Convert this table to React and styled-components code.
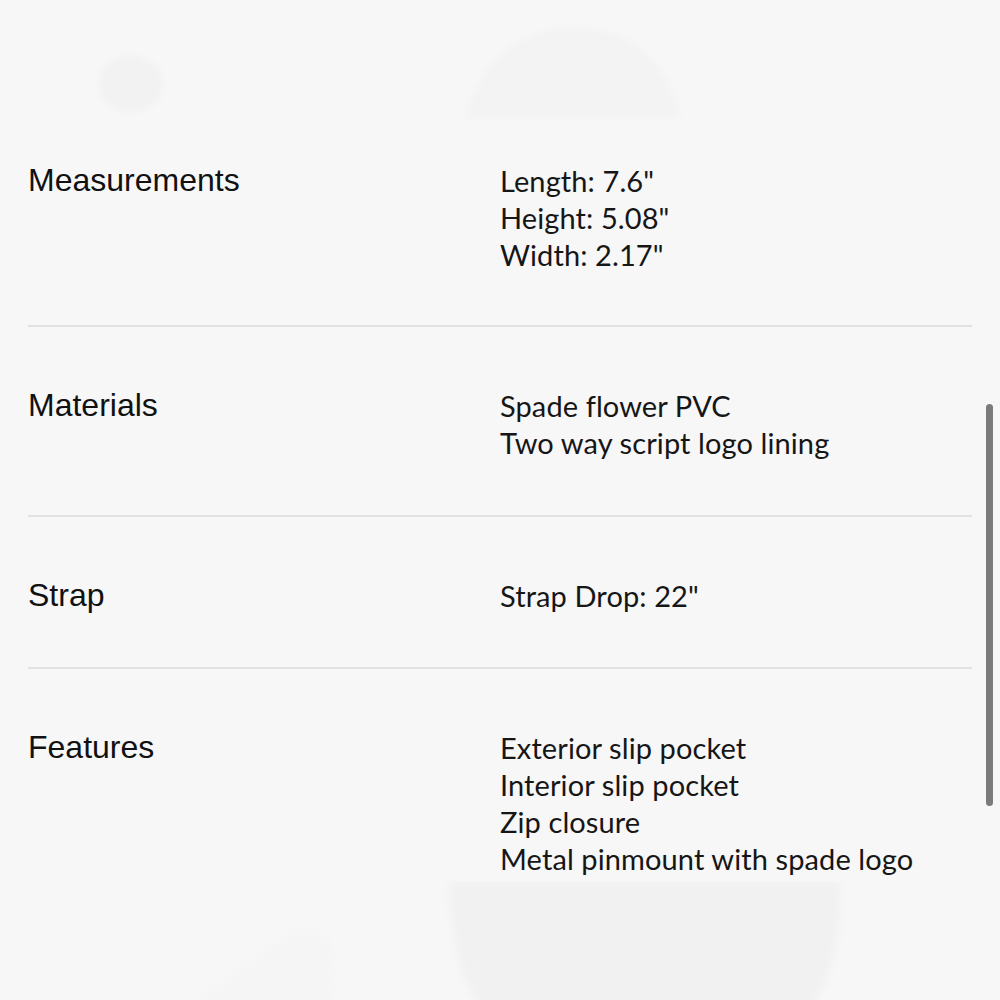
import React from 'react'
import styled, { createGlobalStyle } from 'styled-components'

const specs = [
    { label: 'Measurements', values: ['Length: 7.6"', 'Height: 5.08"', 'Width: 2.17"'] },
    { label: 'Materials', values: ['Spade flower PVC', 'Two way script logo lining'] },
    { label: 'Strap', values: ['Strap Drop: 22"'] },
    { label: 'Features', values: ['Exterior slip pocket', 'Interior slip pocket', 'Zip closure', 'Metal pinmount with spade logo'] },
]

const GlobalStyle = createGlobalStyle`
  html, body {
    margin: 0;
    padding: 0;
    background: #f7f7f7;
  }
  * { box-sizing: border-box; }
`

const Page = styled.div`
  position: relative;
  width: 1000px;
  height: 1000px;
  overflow: hidden;
  background: #f7f7f7;
  display: flex;
  flex-direction: column;
`

const Band = styled.div`
  height: ${p => p.$h}px;
  flex-shrink: 0;
  svg { display: block; }
`

const SpecList = styled.div`
  padding: 0 28px;
  display: flex;
  flex-direction: column;
`

const SpecRow = styled.div`
  display: grid;
  grid-template-columns: 1fr 1fr;
  align-items: start;
  padding: ${p => p.$top}px 0 ${p => p.$bottom}px;
  border-bottom: ${p => (p.$last ? 'none' : '2px solid #e1e1e1')};
`

const Label = styled.div`
  font-family: 'Liberation Sans', Arial, sans-serif;
  font-size: 32px;
  line-height: 36.8px;
  color: #111;
`

const Values = styled.div`
  font-family: Lato, 'Open Sans', sans-serif;
  font-size: 29px;
  line-height: 37px;
  letter-spacing: 0.1px;
  color: #161616;
  display: flex;
  flex-direction: column;
`

const Scrollbar = styled.div`
  position: absolute;
  right: 7px;
  top: 404px;
  width: 7px;
  height: 402px;
  border-radius: 4px;
  background: #7b7b7b;
`

const App = () => {
    const last = specs.length - 1
    return (
        <>
            <GlobalStyle />
            <Page>
                <Band $h={120}>
                    <svg width="1000" height="120" viewBox="0 0 1000 120">
                        <defs>
                            <filter id="soft"><feGaussianBlur stdDeviation="3" /></filter>
                        </defs>
                        <g filter="url(#soft)">
                            <ellipse cx="131" cy="84" rx="32" ry="28" fill="#f2f2f2" />
                            <path d="M466 118 C480 60 520 28 575 28 C630 28 668 60 680 118 Z" fill="#f3f3f3" />
                        </g>
                    </svg>
                </Band>
                <SpecList>
                    {specs.map((s, i) => (
                        <SpecRow
                            key={s.label}
                            $top={i === 0 ? 42 : 60}
                            $bottom={i === last ? 4 : i === 0 ? 52 : i === 1 ? 54 : 53}
                            $last={i === last}
                        >
                            <Label>{s.label}</Label>
                            <Values>
                                {s.values.map(v => <span key={v}>{v}</span>)}
                            </Values>
                        </SpecRow>
                    ))}
                </SpecList>
                <Band $h={140}>
                    <svg width="1000" height="140" viewBox="0 0 1000 140">
                        <defs>
                            <filter id="soft2"><feGaussianBlur stdDeviation="4" /></filter>
                        </defs>
                        <g filter="url(#soft2)">
                            <path d="M450 0 L840 0 C842 60 830 110 800 140 L490 140 C460 100 450 60 450 0 Z" fill="#f1f1f1" />
                            <path d="M170 140 L300 45 L330 60 L335 140 Z" fill="#f5f5f5" />
                        </g>
                    </svg>
                </Band>
                <Scrollbar />
            </Page>
        </>
    )
}

export default App
